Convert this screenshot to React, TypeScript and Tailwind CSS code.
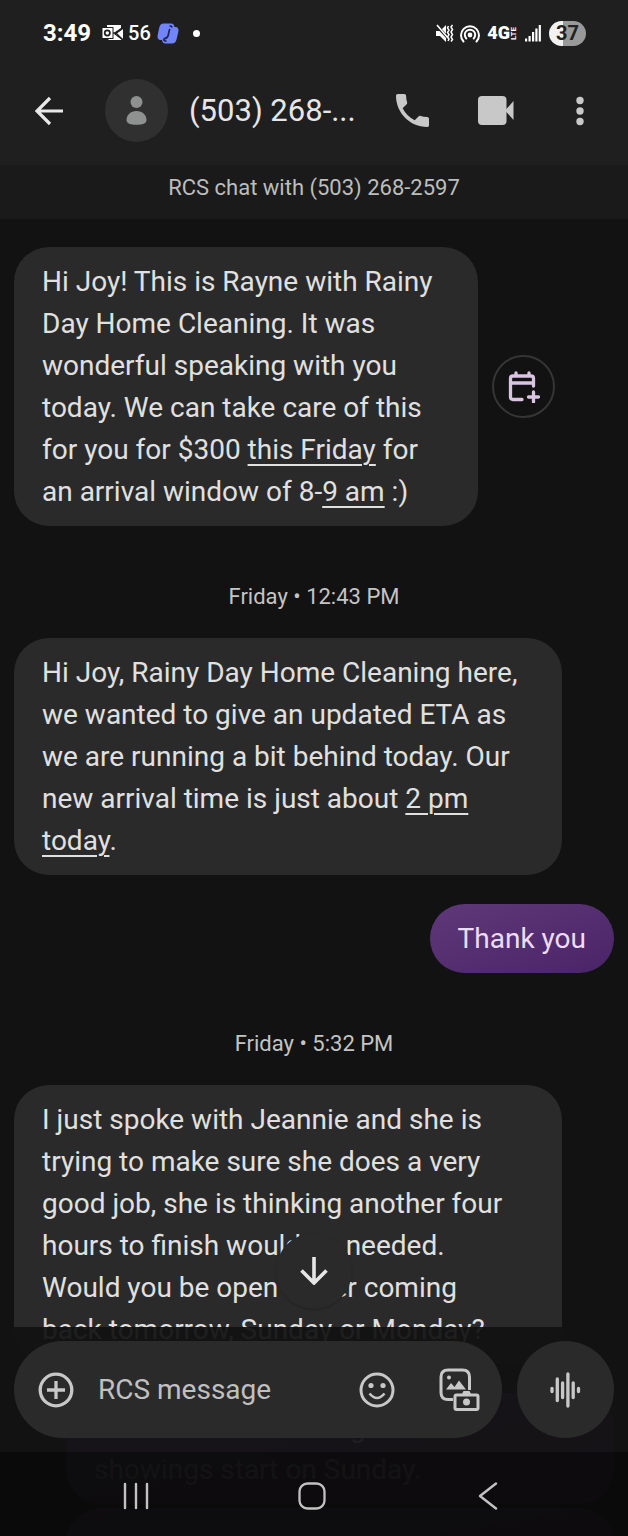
import type { ReactNode } from 'react';

interface BubbleProps {
    children: ReactNode;
    className?: string;
}

const Received = ({ children, className = '' }: BubbleProps) => (
    <div className={`rounded-[35px] bg-[#2a2a2a] pt-[14px] pb-[13px] pl-7 text-[28px] leading-[42px] text-[#e0e0e0] ${className}`}>
        {children}
    </div>
);

const Sent = ({ children, className = '' }: BubbleProps) => (
    <div className={`self-end rounded-[35px] bg-linear-to-br from-[#5f3878] to-[#4a2468] pt-[14px] pb-[13px] px-7 text-[28px] leading-[42px] text-[#eddcf7] ${className}`}>
        {children}
    </div>
);

const DateLine = ({ children }: { children: ReactNode }) => (
    <p className="h-28 pt-14 text-center text-[22px] leading-[30px] text-[#c4c4c4]">{children}</p>
);

const SmartLink = ({ children }: { children: ReactNode }) => (
    <a href="#" className="underline decoration-2 underline-offset-[5px]">{children}</a>
);

const StatusBar = () => (
    <div className="flex h-[66px] items-center pl-[43px] pr-[42px] text-white">
        <span className="text-[24px] font-bold leading-none">3:49</span>

        {/* Outlook */}
        <svg className="ml-[10px]" width="23" height="18" viewBox="0 0 23 18" fill="none">
            <path d="M6 1h14v3l-6 4-1 2 8 6H8l-2-2z" fill="#fff" />
            <path d="M22 5v10l-7-5z" fill="#fff" />
            <rect x="1" y="3.5" width="11" height="11" fill="#fff" stroke="#1f1f1f" />
            <circle cx="6.3" cy="9" r="2.6" stroke="#1f1f1f" strokeWidth="1.7" />
            <path d="M12 9h3l7-5M15 9l7 7" stroke="#1f1f1f" strokeWidth="1.3" />
        </svg>
        <span className="ml-1 text-[20px] font-medium leading-none">56</span>

        {/* Copilot */}
        <svg className="ml-[6px]" width="22" height="21" viewBox="0 0 22 21" fill="none">
            <path d="M6.500 .5h7.500c2.500 0 3 1.500 3.500 3.500h.5c3 0 4 2 3.300 5l-1.800 7.500c-.7 2.700-2 4-4.500 4H8.500c-2.500 0-3-1.500-3.500-3.500h-.7c-3 0-4.300-2-3.600-5L2.300 4.500C3 1.800 4.200.5 6.500.5z" fill="#7184fa" />
            <path d="M12.500 3.200q2-.7 2.700 1.300M13 6c-1.700 2-1 5-2 7s-2 3-4.500 2.500M6.500 16q.5 2.500 3 2" stroke="#1f2450" strokeWidth="1.7" />
        </svg>
        <span className="ml-[14px] size-[7px] rounded-full bg-white" />

        <div className="ml-auto flex items-center">
            {/* Vibrate */}
            <svg width="19" height="19" viewBox="0 0 19 19" fill="none" stroke="#fff">
                <path d="M1 7h4l6-6v17l-6-6H1z" fill="#fff" stroke="none" />
                <path d="M1 1l13 14" stroke="#1f1f1f" strokeWidth="3" />
                <path d="M2 1l11 13" strokeWidth="1.6" />
                <path d="M13.500 2l-1 2 1.500 2-1.500 2.500 1.500 2-1.500 2.500 1.500 2-1 2M17.500 1L16 3l1.500 2.500L16 8l1.500 2.500L16 13l1.500 2.500L16 17.500" strokeWidth="1.5" />
            </svg>
            {/* Hotspot */}
            <svg className="ml-[5px]" width="22" height="19" viewBox="0 0 22 19" fill="none" stroke="#fff" strokeWidth="2" strokeLinecap="round">
                <path d="M4.500 17.500a9 9 0 1 1 13 0M7.300 14.500a5.200 5.200 0 1 1 7.400 0" />
                <circle cx="11" cy="11" r="2.400" fill="#fff" stroke="none" />
            </svg>
            <span className="ml-[6px] text-[18px] font-black leading-none">4G</span>
            <span className="rotate-180 text-[8px] font-bold leading-none [writing-mode:vertical-rl]">LTE</span>
            {/* Signal */}
            <svg className="ml-[6px]" width="18" height="18" viewBox="0 0 18 18" fill="#fff">
                <rect x="1" y="14.500" width="2.200" height="3" />
                <rect x="4.500" y="12" width="2.200" height="5.500" />
                <rect x="8" y="8" width="2.200" height="9.500" />
                <rect x="11.300" y="4.500" width="2.200" height="13" />
                <rect x="14.700" y="1" width="2.200" height="16.500" />
            </svg>
            <span className="ml-[7px] flex h-[25px] w-[37px] items-center justify-center rounded-full bg-linear-to-r from-[#f2f2f2] from-37% to-[#999] to-37% text-[20px] font-bold leading-none text-[#222]">
                37
            </span>
        </div>
    </div>
);

const AppBar = () => (
    <div className="flex h-[99px] items-center pb-[10px] pl-[34px] pr-9">
        <button aria-label="Back">
            <svg width="30" height="30" viewBox="0 0 30 30" fill="none" stroke="#e8e8e8" strokeWidth="3.200">
                <path d="M29 15H3M16 2L3 15l13 13" />
            </svg>
        </button>
        <div className="ml-[41px] flex size-[63px] shrink-0 items-center justify-center rounded-full bg-[#303030]">
            <svg width="21" height="31" viewBox="0 0 21 31" fill="#8f9190">
                <circle cx="10.500" cy="7" r="6" />
                <path d="M.5 25C.5 20 4.500 16 10.500 16s10 4 10 9c0 3.500-4 4.800-10 4.800S.5 28.500.5 25z" />
            </svg>
        </div>
        <h1 className="ml-[21px] flex-1 whitespace-nowrap text-[31px] leading-10 text-[#e6e6e6]">(503) 268-...</h1>
        <button aria-label="Call">
            <svg width="33" height="33" viewBox="3 3 18 18" fill="#c8c8c8">
                <path d="M6.620 10.790c1.440 2.830 3.760 5.140 6.590 6.590l2.200-2.200c.27-.27.67-.36 1.020-.24 1.120.37 2.330.57 3.570.57.55 0 1 .45 1 1V20c0 .55-.45 1-1 1-9.390 0-17-7.610-17-17 0-.55.45-1 1-1h3.500c.55 0 1 .45 1 1 0 1.250.2 2.450.57 3.570.11.35.03.74-.25 1.020z" />
            </svg>
        </button>
        <button aria-label="Video call" className="ml-[49px]">
            <svg width="36" height="29" viewBox="0 0 36 29" fill="#c8c8c8">
                <rect width="28.500" height="29" rx="4" />
                <path d="M27 14.500L35.500 5v19z" />
            </svg>
        </button>
        <button aria-label="More options" className="ml-[54px]">
            <svg width="24" height="30" viewBox="0 0 24 30" fill="#c8c8c8">
                <circle cx="12" cy="4.500" r="3.700" />
                <circle cx="12" cy="15" r="3.700" />
                <circle cx="12" cy="25.500" r="3.700" />
            </svg>
        </button>
    </div>
);

const Composer = () => (
    <form className="flex gap-[15px] bg-[#121212]/94 p-[14px]" onSubmit={e => e.preventDefault()}>
        <div className="flex h-[97px] min-w-0 flex-1 items-center rounded-full bg-[#2a2a2a] pl-6 pr-[22px]">
            <button type="button" aria-label="Attach">
                <svg width="36" height="36" viewBox="0 0 36 36" fill="none" stroke="#c8c8c8" strokeWidth="3.300">
                    <circle cx="18" cy="18" r="15.800" />
                    <path d="M18 9v18M9 18h18" />
                </svg>
            </button>
            <input
                type="text"
                aria-label="RCS message"
                placeholder="RCS message"
                className="ml-6 min-w-0 flex-1 text-[28px] leading-10 text-[#e0e0e0] outline-none placeholder:text-[#c0c0c0]"
            />
            <button type="button" aria-label="Emoji">
                <svg width="36" height="36" viewBox="0 0 36 36" fill="none" stroke="#c8c8c8" strokeWidth="3">
                    <circle cx="18" cy="18" r="16" />
                    <path d="M10.500 21.500q7.500 9 15 0" strokeWidth="2.600" />
                    <circle cx="12" cy="13.500" r="2.600" fill="#c8c8c8" stroke="none" />
                    <circle cx="24" cy="13.500" r="2.600" fill="#c8c8c8" stroke="none" />
                </svg>
            </button>
            <button type="button" aria-label="Gallery" className="ml-11">
                <svg width="41" height="43" viewBox="0 0 41 43" fill="none" stroke="#c8c8c8" strokeWidth="3">
                    <path d="M14 31.500H9q-7 0-7-7V9q0-7 7-7h14.500q7 0 7 7v13" />
                    <circle cx="10" cy="9.500" r="2" fill="#c8c8c8" stroke="none" />
                    <path d="M7 21.500l5-6.500 3.500 4 4.500-6.500 7 9z" fill="#c8c8c8" stroke="none" />
                    <rect x="16" y="27" width="23" height="14.500" rx="1.500" fill="#2a2a2a" />
                    <path d="M23 26l1.500-3h6l1.500 3z" fill="#c8c8c8" stroke="none" />
                    <circle cx="27.500" cy="34" r="3.500" fill="#c8c8c8" stroke="none" />
                </svg>
            </button>
        </div>
        <button type="button" aria-label="Voice message" className="flex size-[97px] shrink-0 items-center justify-center rounded-full bg-[#2a2a2a]">
            <svg width="32" height="36" viewBox="0 0 32 36" stroke="#c8c8c8" strokeWidth="3.300" strokeLinecap="round">
                <path d="M2 16.500v3M7.300 7v21.500M12.600 11v14.500M17.900 2v32M23.200 11v14.500M28.500 16.500v3" />
            </svg>
        </button>
    </form>
);

const NavBar = () => (
    <nav className="flex h-[84px] bg-[#0a0a0a]/96 pl-12 pr-13 pt-1">
        <button aria-label="Recents" className="flex flex-1 items-center justify-center">
            <svg width="28" height="28" viewBox="0 0 28 28" stroke="#c2c2c2" strokeWidth="2.400" strokeLinecap="round">
                <path d="M3 2v24M14 2v24M25 2v24" />
            </svg>
        </button>
        <button aria-label="Home" className="flex flex-1 items-center justify-center">
            <svg width="28" height="28" viewBox="0 0 28 28" fill="none" stroke="#c2c2c2" strokeWidth="2.300">
                <rect x="1.500" y="1.500" width="25" height="25" rx="8" />
            </svg>
        </button>
        <button aria-label="Back to previous screen" className="flex flex-1 items-center justify-center">
            <svg width="20" height="28" viewBox="0 0 20 28" fill="none" stroke="#c2c2c2" strokeWidth="2.400" strokeLinecap="round" strokeLinejoin="round">
                <path d="M18 1.500L2 14l16 12.500" />
            </svg>
        </button>
    </nav>
);

const App = () => {
    return (
        <div className="relative flex h-screen flex-col overflow-hidden bg-[#121212] font-[Roboto,'Noto_Sans',sans-serif]">
            <header className="shrink-0 bg-[#1f1f1f]">
                <StatusBar />
                <AppBar />
                <p className="h-[54px] bg-[#1a1a1a] pt-2 text-center text-[22px] leading-[30px] text-[#bdbdbd]">
                    RCS chat with (503) 268-2597
                </p>
            </header>

            <main className="flex min-h-0 flex-1 flex-col overflow-hidden px-[14px] pt-7 *:shrink-0">
                <div className="flex items-center gap-[14px]">
                    <Received className="w-[464px] pr-7">
                        Hi Joy! This is Rayne with Rainy Day Home Cleaning. It was wonderful speaking with you today. We can take care of this for you for $300 <SmartLink>this Friday</SmartLink> for an arrival window of 8-<SmartLink>9 am</SmartLink> :)
                    </Received>
                    <button aria-label="Add to calendar" className="flex size-[63px] items-center justify-center rounded-full border-2 border-[#363534]">
                        <svg width="32" height="32" viewBox="0 0 32 32" fill="none" stroke="#d9c4e2" strokeWidth="3.300" strokeLinecap="round">
                            <path d="M14 28.500H5q-2.500 0-2.500-2.500V7.500Q2.500 5 5 5h18q2.500 0 2.500 2.500V15M2.500 12h23M8 2v3M21 2v3M25.500 21v10M20.500 26h10" />
                        </svg>
                    </button>
                </div>

                <DateLine>Friday • 12:43 PM</DateLine>
                <Received className="w-[548px] pr-10">
                    Hi Joy, Rainy Day Home Cleaning here, we wanted to give an updated ETA as we are running a bit behind today. Our new arrival time is just about <SmartLink>2 pm today</SmartLink>.
                </Received>
                <Sent className="mt-[29px]">Thank you</Sent>

                <DateLine>Friday • 5:32 PM</DateLine>
                <Received className="w-[548px] pr-10">
                    I just spoke with Jeannie and she is trying to make sure she does a very good job, she is thinking another four hours to finish would be needed. Would you be open to her coming back tomorrow, Sunday or Monday?
                </Received>
                <Sent className="mt-[29px] w-[548px]">
                    <span className="block pl-64">g</span>
                    showings start on Sunday.
                </Sent>
                <Sent className="mt-1 h-24 w-[548px]">{null}</Sent>
            </main>

            <div className="absolute inset-x-0 bottom-0">
                <button
                    aria-label="Scroll to latest"
                    className="absolute -top-[94px] left-1/2 flex size-[76px] -translate-x-1/2 items-center justify-center rounded-full bg-[#2a2a2a] shadow-[0_1px_2px_rgba(0,0,0,0.2)]"
                >
                    <svg width="28" height="28" viewBox="0 0 28 28" fill="none" stroke="#e6e6e6" strokeWidth="3.600">
                        <path d="M14 0v26M1.500 13.500L14 26l12.500-12.500" />
                    </svg>
                </button>
                <Composer />
                <NavBar />
            </div>
        </div>
    );
};

export default App;
